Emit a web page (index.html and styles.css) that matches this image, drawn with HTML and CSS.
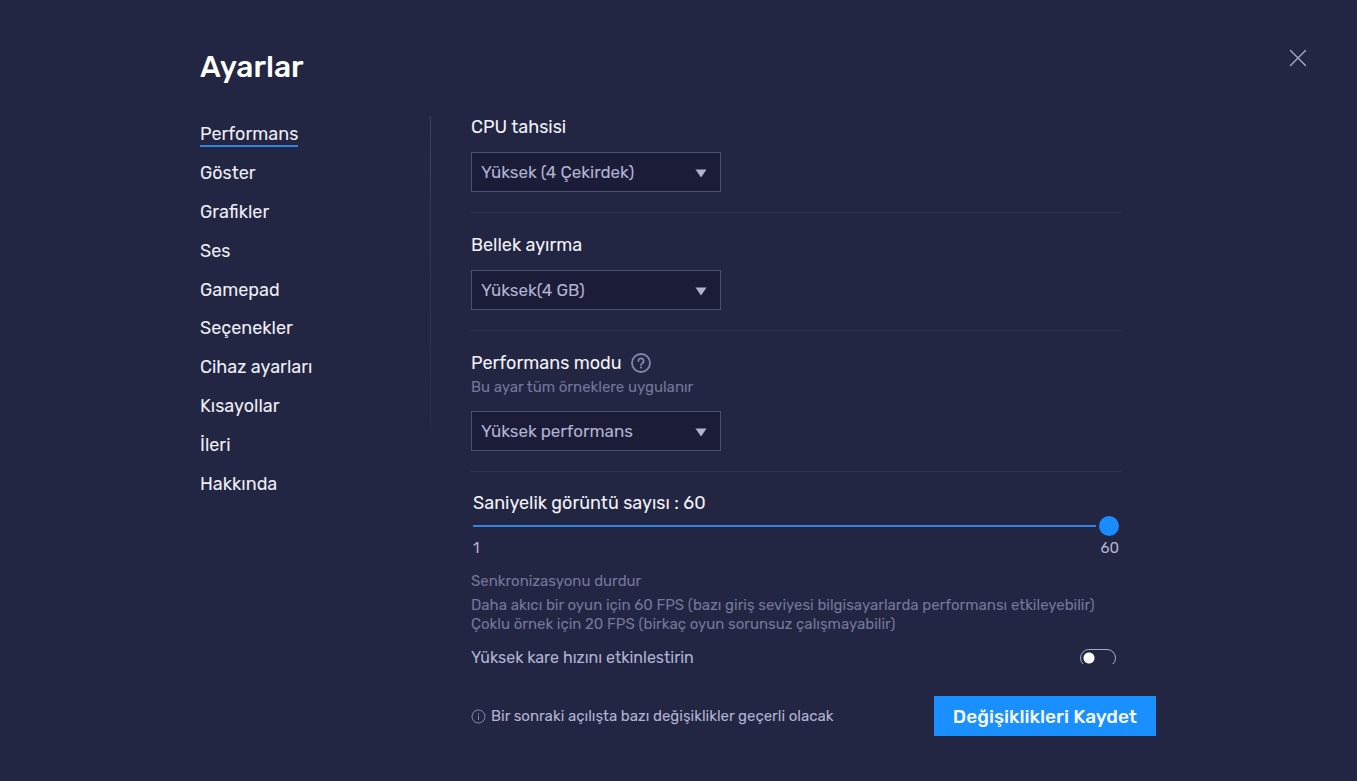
FILE: index.html
```html
<!DOCTYPE html>
<html lang="tr">
<head>
<meta charset="utf-8">
<meta name="viewport" content="width=device-width, initial-scale=1">
<title>Ayarlar</title>
<link rel="stylesheet" href="styles.css">
</head>
<body>
<main class="settings">
  <header class="header">
    <h1 class="title">Ayarlar</h1>
    <button class="close" type="button" aria-label="Kapat">
      <svg width="18" height="18" viewBox="0 0 18 18" fill="none" stroke="currentColor" stroke-width="1.4" stroke-linecap="round"><path d="M1.500 1.500l15 15M16.500 1.500l-15 15"/></svg>
    </button>
  </header>
  <div class="body">
    <nav class="nav">
      <a class="nav-link active" href="#performans">Performans</a>
      <a class="nav-link" href="#goster">Göster</a>
      <a class="nav-link" href="#grafikler">Grafikler</a>
      <a class="nav-link" href="#ses">Ses</a>
      <a class="nav-link" href="#gamepad">Gamepad</a>
      <a class="nav-link" href="#secenekler">Seçenekler</a>
      <a class="nav-link" href="#cihaz">Cihaz ayarları</a>
      <a class="nav-link" href="#kisayollar">Kısayollar</a>
      <a class="nav-link" href="#ileri">İleri</a>
      <a class="nav-link" href="#hakkinda">Hakkında</a>
    </nav>
    <div class="divider"></div>
    <div class="panel">
      <section class="group">
        <label class="label" for="cpu">CPU tahsisi</label>
        <div class="select-box">
          <select class="select" id="cpu"><option>Yüksek (4 Çekirdek)</option></select>
          <svg class="arrow" width="12" height="9" viewBox="0 0 12 9"><path d="M.5.5h11L6 8.500z" fill="currentColor"/></svg>
        </div>
      </section>
      <section class="group">
        <label class="label" for="ram">Bellek ayırma</label>
        <div class="select-box">
          <select class="select" id="ram"><option>Yüksek(4 GB)</option></select>
          <svg class="arrow" width="12" height="9" viewBox="0 0 12 9"><path d="M.5.5h11L6 8.500z" fill="currentColor"/></svg>
        </div>
      </section>
      <section class="group">
        <div class="label-row">
          <label class="label" for="mode">Performans modu</label>
          <svg class="help" width="20" height="20" viewBox="0 0 20 20" fill="none" stroke="currentColor" stroke-width="1.8" stroke-linecap="round"><circle cx="10" cy="10" r="9"/><path d="M7.400 8a2.600 2.600 0 1 1 4.200 2.050c-.9.700-1.600 1.050-1.600 2"/><circle cx="10" cy="14.500" r="1.100" fill="currentColor" stroke="none"/></svg>
        </div>
        <p class="hint mode-hint">Bu ayar tüm örneklere uygulanır</p>
        <div class="select-box">
          <select class="select" id="mode"><option>Yüksek performans</option></select>
          <svg class="arrow" width="12" height="9" viewBox="0 0 12 9"><path d="M.5.5h11L6 8.500z" fill="currentColor"/></svg>
        </div>
      </section>
      <section class="fps">
        <div class="slider">
          <label class="label" for="fps">Saniyelik görüntü sayısı : 60</label>
          <input class="range" id="fps" type="range" min="1" max="60" value="60">
          <div class="scale"><span>1</span><span>60</span></div>
        </div>
        <h2 class="hint">Senkronizasyonu durdur</h2>
        <p class="hint tips">Daha akıcı bir oyun için 60 FPS (bazı giriş seviyesi bilgisayarlarda performansı etkileyebilir)<br>Çoklu örnek için 20 FPS (birkaç oyun sorunsuz çalışmayabilir)</p>
        <div class="toggle-row">
          <label for="highfps">Yüksek kare hızını etkinlestirin</label>
          <input class="toggle" id="highfps" type="checkbox" role="switch">
        </div>
      </section>
    </div>
  </div>
  <footer class="footer">
    <p class="notice">
      <svg class="info" width="15" height="15" viewBox="0 0 15 15" fill="none" stroke="currentColor"><circle cx="7.500" cy="7.500" r="6.500"/><path d="M7.500 6.500v4.500M7.500 4v1.300"/></svg>
      Bir sonraki açılışta bazı değişiklikler geçerli olacak
    </p>
    <button class="save" type="button">Değişiklikleri Kaydet</button>
  </footer>
</main>
</body>
</html>
```
FILE: styles.css
```css
* { box-sizing: border-box; }

body {
  margin: 0;
  background: #232642;
  color: #f2f2fa;
  font-family: Rubik, Roboto, "Liberation Sans", sans-serif;
  font-size: 18px;
}

h1, h2, p { margin: 0; font-weight: 400; }

.settings {
  height: 100vh;
  display: flex;
  flex-direction: column;
  padding: 48px 201px 45px 200px;
}

.header {
  display: flex;
  justify-content: space-between;
  align-items: flex-start;
  margin-right: -151px;
  height: 68px;
  flex-shrink: 0;
}
.title { font-size: 30px; line-height: 38px; font-weight: 500; color: #fff; }
.close {
  display: flex;
  padding: 1px 0;
  border: 0;
  background: none;
  color: #a9aac8;
}

.body {
  flex: 1;
  min-height: 0;
  display: grid;
  grid-template-columns: 230px 1px 1fr;
}

.nav {
  display: grid;
  align-self: start;
  grid-auto-rows: 1fr;
  min-height: 388px;
  justify-items: start;
  align-items: center;
}
.nav-link {
  color: #eeeef8;
  text-decoration: none;
  line-height: 22px;
  border-bottom: 2px solid transparent;
}
.nav-link.active { border-color: #2f86df; }

.divider {
  height: 370px;
  background: linear-gradient(#3e4163, #232642);
}

.panel {
  overflow-y: auto;
  scrollbar-width: none;
  padding: 0 35px 0 40px;
}
.group {
  padding-bottom: 20px;
  margin-bottom: 21px;
  border-bottom: 1px solid #2e3150;
}
.group:nth-of-type(3) { margin-bottom: 20px; }
.label { display: block; line-height: 22px; }
.label-row { display: flex; align-items: center; gap: 9px; }
.help { color: #8587aa; }
.hint { font-size: 15px; line-height: 19px; color: #75779a; }
.mode-hint { margin-top: 4px; }

.select-box {
  position: relative;
  max-width: 250px;
  margin-top: 14px;
  color: #b2b3d3;
}
.select {
  display: block;
  width: 100%;
  height: 40px;
  padding: 0 40px 0 9px;
  appearance: none;
  border: 1px solid #4a4c70;
  border-radius: 0;
  background: #1b1d38;
  color: inherit;
  font: inherit;
  font-size: 17px;
}
.arrow {
  position: absolute;
  right: 14px;
  top: 17px;
  pointer-events: none;
}

.slider { padding: 0 2px; }
.range {
  display: block;
  width: 100%;
  height: 20px;
  margin: 2px 0;
  appearance: none;
  background: linear-gradient(#2f86df, #2f86df) left center / calc(100% - 23px) 2px no-repeat;
}
.range::-webkit-slider-thumb {
  appearance: none;
  width: 20px;
  height: 20px;
  border-radius: 50%;
  background: #1a8cff;
}
.scale {
  display: flex;
  justify-content: space-between;
  margin-bottom: 14px;
  font-size: 15px;
  line-height: 20px;
  color: #b2b3d3;
}
.tips { margin-top: 5px; }

.toggle-row {
  display: flex;
  justify-content: space-between;
  align-items: center;
  margin-top: 15px;
  padding-right: 5px;
  font-size: 16px;
  line-height: 18px;
  color: #b2b3d3;
}
.toggle {
  appearance: none;
  width: 36px;
  height: 18px;
  margin: 0;
  border: 1px solid #a9aac8;
  border-radius: 9px;
  background: radial-gradient(circle at 8px 8px, #fff 5px, transparent 6px);
}

.footer {
  display: flex;
  justify-content: space-between;
  align-items: center;
  margin-top: 32px;
  padding-left: 271px;
}
.notice {
  display: flex;
  align-items: center;
  gap: 5px;
  font-size: 15px;
  color: #b2b3d3;
}
.info { color: #8587aa; }
.save {
  height: 40px;
  padding: 0 19px;
  border: 0;
  background: #1a8fff;
  color: #f4f9ff;
  font-family: inherit;
  font-size: 19px;
  font-weight: 500;
}
```
